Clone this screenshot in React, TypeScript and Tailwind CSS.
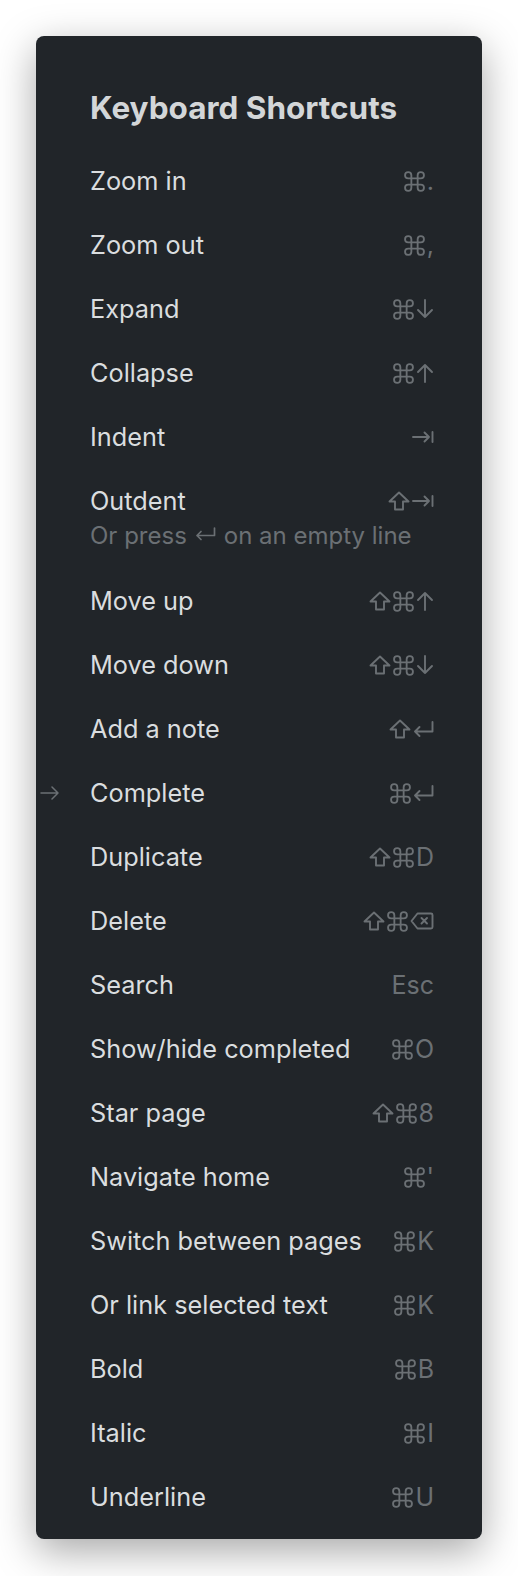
import React from 'react';

type Key = 'cmd' | 'shift' | 'up' | 'down' | 'tab' | 'ret' | 'del' | string;

const stroke = {
  fill: 'none',
  stroke: 'currentColor',
  strokeWidth: 1.9,
  strokeLinecap: 'round' as const,
  strokeLinejoin: 'round' as const,
};

const KeyGlyph: React.FC<{ k: Key }> = ({ k }) => {
  switch (k) {
    case 'cmd':
      return (
        <svg width="21" height="21" viewBox="2 2 20 20" {...stroke} strokeWidth={1.75}>
          <path d="M15 6v12a3 3 0 1 0 3-3H6a3 3 0 1 0 3 3V6a3 3 0 1 0-3 3h12a3 3 0 1 0-3-3" />
        </svg>
      );
    case 'shift':
      return (
        <svg width="22" height="20" viewBox="0 0 22 20" {...stroke}>
          <path d="M11 1.5 L20.5 10.5 H15 V18.5 H7 V10.5 H1.5 Z" />
        </svg>
      );
    case 'up':
      return (
        <svg width="18" height="20" viewBox="0 0 18 20" {...stroke}>
          <path d="M9 19 V2 M2 9 L9 2 L16 9" />
        </svg>
      );
    case 'down':
      return (
        <svg width="18" height="20" viewBox="0 0 18 20" {...stroke}>
          <path d="M9 1 V18 M2 11 L9 18 L16 11" />
        </svg>
      );
    case 'tab':
      return (
        <svg width="22" height="12" viewBox="0 0 22 12" {...stroke}>
          <path d="M1 6 H17 M12.5 1.5 L17 6 L12.5 10.5 M20.5 1 V11" />
        </svg>
      );
    case 'ret':
      return (
        <svg width="21" height="17" viewBox="0 0 21 17" {...stroke}>
          <path d="M19.5 1 V10.5 H2 M6.5 6 L2 10.5 L6.5 15" />
        </svg>
      );
    case 'del':
      return (
        <svg width="24" height="18" viewBox="0 0 24 18" {...stroke}>
          <path d="M7.5 1.5 H21 a1.5 1.5 0 0 1 1.5 1.5 V15 a1.5 1.5 0 0 1 -1.5 1.5 H7.5 L1.5 9 Z M11.5 6 L17 11.5 M17 6 L11.5 11.5" />
        </svg>
      );
    default:
      return <span className="leading-none">{k}</span>;
  }
};

const shortcuts: { label: string; keys: Key[]; note?: boolean; active?: boolean }[] = [
  { label: 'Zoom in', keys: ['cmd', '.'] },
  { label: 'Zoom out', keys: ['cmd', ','] },
  { label: 'Expand', keys: ['cmd', 'down'] },
  { label: 'Collapse', keys: ['cmd', 'up'] },
  { label: 'Indent', keys: ['tab'] },
  { label: 'Outdent', keys: ['shift', 'tab'], note: true },
  { label: 'Move up', keys: ['shift', 'cmd', 'up'] },
  { label: 'Move down', keys: ['shift', 'cmd', 'down'] },
  { label: 'Add a note', keys: ['shift', 'ret'] },
  { label: 'Complete', keys: ['cmd', 'ret'], active: true },
  { label: 'Duplicate', keys: ['shift', 'cmd', 'D'] },
  { label: 'Delete', keys: ['shift', 'cmd', 'del'] },
  { label: 'Search', keys: ['Esc'] },
  { label: 'Show/hide completed', keys: ['cmd', 'O'] },
  { label: 'Star page', keys: ['shift', 'cmd', '8'] },
  { label: 'Navigate home', keys: ['cmd', "'"] },
  { label: 'Switch between pages', keys: ['cmd', 'K'] },
  { label: 'Or link selected text', keys: ['cmd', 'K'] },
  { label: 'Bold', keys: ['cmd', 'B'] },
  { label: 'Italic', keys: ['cmd', 'I'] },
  { label: 'Underline', keys: ['cmd', 'U'] },
];

const App: React.FC = () => {
  return (
    <div className="min-h-screen bg-white pt-[36px] px-[36px] pb-[37px]" style={{ fontFamily: 'Inter, "Noto Sans", sans-serif' }}>
      <div className="w-[446px] bg-[#212529] rounded-[8px] shadow-[0_12px_40px_rgba(0,0,0,0.35)] pt-[52px] pb-[10px] pl-[54px] pr-[48px]">
        <h1 className="text-[31.5px] leading-[40px] font-bold text-[#d3d6d8] mb-[21px]">Keyboard Shortcuts</h1>

        {shortcuts.map((s, i) => (
          <div key={i} className={`relative ${s.note ? 'h-[100px]' : 'h-16'}`}>
            <div className="h-16 flex items-center justify-between">
              {s.active && (
                <span className="absolute left-[-50px] top-[25px] text-[#6b7074]">
                  <svg width="20" height="14" viewBox="0 0 20 14" {...stroke} strokeWidth={1.5}>
                    <path d="M1 7 H18 M12 1 L18 7 L12 13" />
                  </svg>
                </span>
              )}
              <span className="text-[25.3px] leading-none text-[#dadddf]">{s.label}</span>
              <span className="flex items-center gap-[2px] text-[25px] text-[#6b7074]">
                {s.keys.map((k, j) => (
                  <KeyGlyph key={j} k={k} />
                ))}
              </span>
            </div>
            {s.note && (
              <div className="flex items-center text-[24px] leading-none text-[#6b7074] -mt-[9px]">
                <span>Or press</span>
                <span className="mx-[8px] mt-[-4px]">
                  <svg width="21" height="14" viewBox="0 0 21 14" {...stroke} strokeWidth={1.7}>
                    <path d="M19.5 1 V8.5 H2 M6 4.5 L2 8.5 L6 12.5" />
                  </svg>
                </span>
                <span>on an empty line</span>
              </div>
            )}
          </div>
        ))}
      </div>
    </div>
  );
};

export default App;
